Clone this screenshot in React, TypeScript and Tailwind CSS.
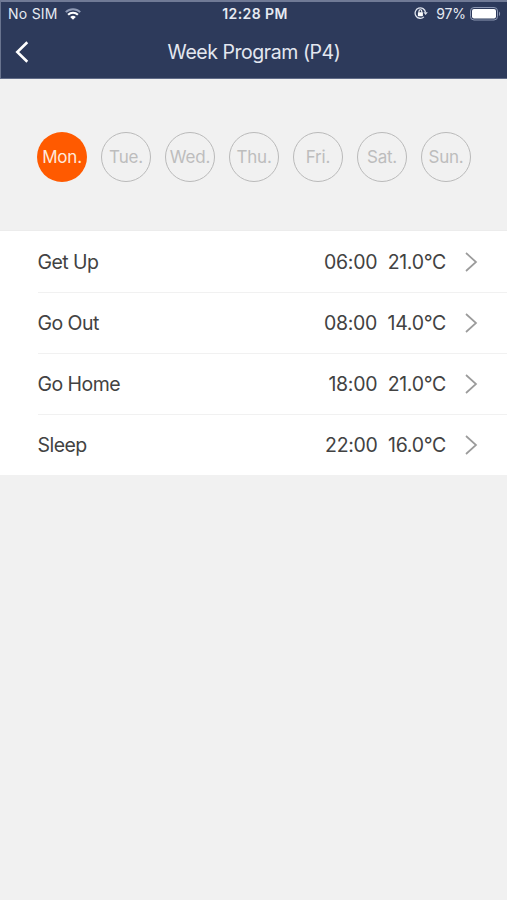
import { useState } from "react";
import clsx from "clsx";

type Period = {
  name: string;
  time: string;
  temperature: string;
};

const days = ["Mon.", "Tue.", "Wed.", "Thu.", "Fri.", "Sat.", "Sun."];

const periods: Period[] = [
  { name: "Get Up", time: "06:00", temperature: "21.0°C" },
  { name: "Go Out", time: "08:00", temperature: "14.0°C" },
  { name: "Go Home", time: "18:00", temperature: "21.0°C" },
  { name: "Sleep", time: "22:00", temperature: "16.0°C" }
];

const WifiIcon = () => (
  <svg width="16" height="12" viewBox="0 0 16 12" fill="none" aria-hidden="true">
    <path d="M.8 4.1a10.4 10.4 0 0 1 14.4 0" stroke="#8f9ab5" strokeWidth="2" />
    <path d="M3.1 6.7a7.1 7.1 0 0 1 9.8 0" stroke="#fff" strokeWidth="2.2" />
    <path d="M8 11.8 5.2 9.1a4 4 0 0 1 5.6 0Z" fill="#fff" />
  </svg>
);

const RotationLockIcon = () => (
  <svg className="mb-px" width="15" height="14" viewBox="0 0 15 14" fill="none" aria-hidden="true">
    <path d="M9.9 10.9a5.2 5.2 0 1 1 1.6-4.5" stroke="#dfe4ee" strokeWidth="1.3" />
    <path d="M9.4 6.2h4.4l-2.2 2.7Z" fill="#dfe4ee" />
    <rect x="3.9" y="6.2" width="5" height="4" rx="0.4" fill="#fff" />
    <path d="M5 6.5V5.2a1.4 1.4 0 0 1 2.8 0v1.3" stroke="#fff" strokeWidth="1.1" />
  </svg>
);

const BatteryIcon = () => (
  <svg width="31" height="14" viewBox="0 0 31 14" fill="none" aria-hidden="true">
    <rect x="0.5" y="0.5" width="27" height="12.5" rx="3.5" stroke="#8d98b3" />
    <rect x="2" y="2" width="24" height="9.5" rx="2" fill="#fff" />
    <path d="M29 4.5c1.5.8 1.5 3.8 0 4.6Z" fill="#8d98b3" />
  </svg>
);

const StatusBar = () => (
  <div className="grid h-[23px] grid-cols-[1fr_auto_1fr] items-center pl-[7px] pr-[6px] text-[14px] leading-[20px] text-[#e6eaf2]">
    <div className="flex items-center gap-[7px]">
      <span className="tracking-[0.25px]">No SIM</span>
      <WifiIcon />
    </div>
    <span className="pl-px font-semibold tracking-[0.4px]">12:28 PM</span>
    <div className="flex items-center justify-end">
      <RotationLockIcon />
      <span className="ml-[7px] mr-[4px] tracking-[-0.1px]">97%</span>
      <BatteryIcon />
    </div>
  </div>
);

const Header = () => (
  <header className="h-[79px] border-b border-l border-t-2 border-b-[#606b87] border-l-[#69748f] border-t-[#707a96] bg-[#2d3a5b]">
    <StatusBar />
    <div className="grid h-[54px] grid-cols-[40px_1fr_40px] items-center">
      <button type="button" aria-label="Back" className="pl-[13px]">
        <svg width="16" height="24" viewBox="0 0 16 24" fill="none">
          <path d="M13.3 2.2 3.3 12l10 9.8" stroke="#fff" strokeWidth="2.6" />
        </svg>
      </button>
      <h1 className="pt-px text-center text-[19.5px] tracking-[-0.45px] text-[#e3e7f0]">Week Program (P4)</h1>
    </div>
  </header>
);

const PeriodRow = ({ period }: { period: Period }) => (
  <li className="group pl-[37.5px]">
    <button
      type="button"
      className="flex h-[61px] w-full items-center border-t border-[#f1f1f1] pr-[29px] text-[19.5px] text-[#424242] group-first:border-white"
    >
      <span className="pt-[2px] tracking-[-0.55px]">{period.name}</span>
      <span className="ml-auto pt-[2px] tracking-[-0.3px]">{period.time}</span>
      <span className="ml-[10.5px] pt-[2px] tracking-[-0.3px]">{period.temperature}</span>
      <svg className="ml-[18px]" width="14" height="22" viewBox="0 0 14 22" fill="none" aria-hidden="true">
        <path d="m2 2 10 9-10 9" stroke="#9b9b9b" strokeWidth="1.7" />
      </svg>
    </button>
  </li>
);

export default function App() {
  const [selectedDay, setSelectedDay] = useState(days[0]);

  return (
    <div className="min-h-screen w-full bg-[#f1f1f1] font-['Inter','Liberation_Sans',sans-serif]">
      <Header />
      <div className="flex h-[152px] items-center gap-[14px] border-b border-[#ececec] pl-[37px] pt-[5px]">
        {days.map((day) => (
          <button
            key={day}
            type="button"
            onClick={() => setSelectedDay(day)}
            className={clsx(
              "flex size-[50px] shrink-0 items-center justify-center rounded-full pt-px text-[17px] tracking-[-0.2px]",
              day === selectedDay ? "bg-[#ff5a00] text-[#ffe9dc]" : "border border-[#bababa] text-[#bdbdbd]"
            )}
          >
            {day}
          </button>
        ))}
      </div>
      <ul className="bg-white">
        {periods.map((period) => (
          <PeriodRow key={period.name} period={period} />
        ))}
      </ul>
    </div>
  );
}
